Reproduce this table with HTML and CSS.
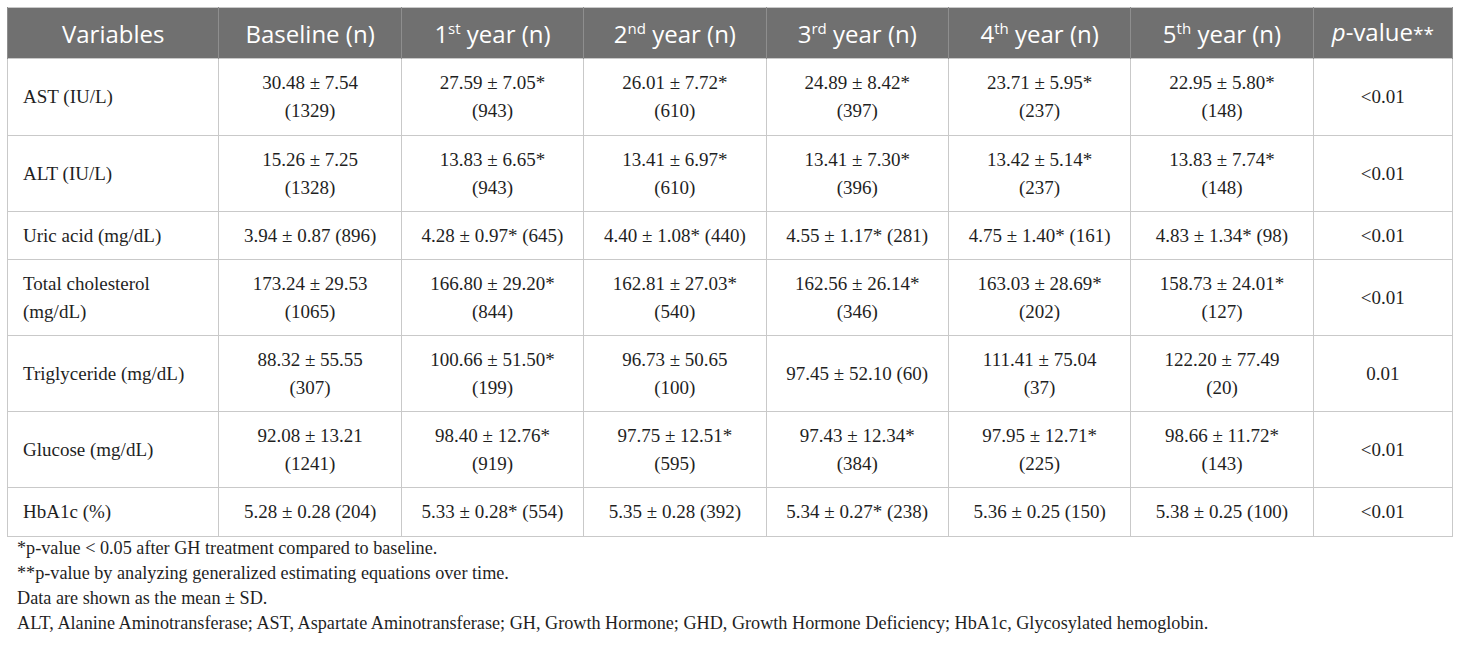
FILE: index.html
```html
<!DOCTYPE html>
<html>
<head>
<meta charset="utf-8">
<link rel="stylesheet" href="styles.css">
</head>
<body>
<div class="page">
<table class="data">
<colgroup>
<col class="c-var"><col class="c-yr"><col class="c-yr"><col class="c-yr"><col class="c-yr"><col class="c-yr"><col class="c-yr"><col class="c-p">
</colgroup>
<thead>
<tr>
<th>Variables</th>
<th>Baseline (n)</th>
<th>1<sup>st</sup> year (n)</th>
<th>2<sup>nd</sup> year (n)</th>
<th>3<sup>rd</sup> year (n)</th>
<th>4<sup>th</sup> year (n)</th>
<th>5<sup>th</sup> year (n)</th>
<th><i>p</i>-value<span class="ast">**</span></th>
</tr>
</thead>
<tbody>
<tr class="two first">
<td>AST (IU/L)</td>
<td>30.48 ± 7.54<br>(1329)</td>
<td>27.59 ± 7.05*<br>(943)</td>
<td>26.01 ± 7.72*<br>(610)</td>
<td>24.89 ± 8.42*<br>(397)</td>
<td>23.71 ± 5.95*<br>(237)</td>
<td>22.95 ± 5.80*<br>(148)</td>
<td>&lt;0.01</td>
</tr>
<tr class="two">
<td>ALT (IU/L)</td>
<td>15.26 ± 7.25<br>(1328)</td>
<td>13.83 ± 6.65*<br>(943)</td>
<td>13.41 ± 6.97*<br>(610)</td>
<td>13.41 ± 7.30*<br>(396)</td>
<td>13.42 ± 5.14*<br>(237)</td>
<td>13.83 ± 7.74*<br>(148)</td>
<td>&lt;0.01</td>
</tr>
<tr>
<td>Uric acid (mg/dL)</td>
<td>3.94 ± 0.87 (896)</td>
<td>4.28 ± 0.97* (645)</td>
<td>4.40 ± 1.08* (440)</td>
<td>4.55 ± 1.17* (281)</td>
<td>4.75 ± 1.40* (161)</td>
<td>4.83 ± 1.34* (98)</td>
<td>&lt;0.01</td>
</tr>
<tr class="two">
<td>Total cholesterol<br>(mg/dL)</td>
<td>173.24 ± 29.53<br>(1065)</td>
<td>166.80 ± 29.20*<br>(844)</td>
<td>162.81 ± 27.03*<br>(540)</td>
<td>162.56 ± 26.14*<br>(346)</td>
<td>163.03 ± 28.69*<br>(202)</td>
<td>158.73 ± 24.01*<br>(127)</td>
<td>&lt;0.01</td>
</tr>
<tr class="two">
<td>Triglyceride (mg/dL)</td>
<td>88.32 ± 55.55<br>(307)</td>
<td>100.66 ± 51.50*<br>(199)</td>
<td>96.73 ± 50.65<br>(100)</td>
<td>97.45 ± 52.10 (60)</td>
<td>111.41 ± 75.04<br>(37)</td>
<td>122.20 ± 77.49<br>(20)</td>
<td>0.01</td>
</tr>
<tr class="two">
<td>Glucose (mg/dL)</td>
<td>92.08 ± 13.21<br>(1241)</td>
<td>98.40 ± 12.76*<br>(919)</td>
<td>97.75 ± 12.51*<br>(595)</td>
<td>97.43 ± 12.34*<br>(384)</td>
<td>97.95 ± 12.71*<br>(225)</td>
<td>98.66 ± 11.72*<br>(143)</td>
<td>&lt;0.01</td>
</tr>
<tr class="last">
<td>HbA1c (%)</td>
<td>5.28 ± 0.28 (204)</td>
<td>5.33 ± 0.28* (554)</td>
<td>5.35 ± 0.28 (392)</td>
<td>5.34 ± 0.27* (238)</td>
<td>5.36 ± 0.25 (150)</td>
<td>5.38 ± 0.25 (100)</td>
<td>&lt;0.01</td>
</tr>
</tbody>
</table>
<div class="notes">
<p>*p-value &lt; 0.05 after GH treatment compared to baseline.</p>
<p>**p-value by analyzing generalized estimating equations over time.</p>
<p>Data are shown as the mean ± SD.</p>
<p>ALT, Alanine Aminotransferase; AST, Aspartate Aminotransferase; GH, Growth Hormone; GHD, Growth Hormone Deficiency; HbA1c, Glycosylated hemoglobin.</p>
</div>
</div>
</body>
</html>
```
FILE: styles.css
```css
html, body {
  margin: 0;
  padding: 0;
  background: #ffffff;
}
.page {
  padding: 7px 0 0 7px;
  font-family: "Liberation Serif", "Times New Roman", serif;
  color: #222;
}
.data {
  border-collapse: collapse;
  table-layout: fixed;
  width: 1446px;
  border: 1px solid #c9c9c9;
}
.c-var { width: 211px; }
.c-yr { width: 182px; }
.c-p { width: 139px; }
.data th {
  background: #707070;
  color: #ffffff;
  font-family: "Open Sans", "Noto Sans", sans-serif;
  font-weight: 400;
  font-size: 24px;
  line-height: 33px;
  height: 51px;
  padding: 0 4px;
  border-left: 1px solid #8e8e8e;
  border-right: 1px solid #8e8e8e;
  text-align: center;
  box-sizing: border-box;
  white-space: nowrap;
}
.data th sup {
  font-size: 15px;
  line-height: 0;
  vertical-align: 9px;
}
.data th .ast {
  font-size: 19px;
}
.data td {
  font-size: 19px;
  line-height: 28px;
  padding: 9px 6px;
  height: 48px;
  box-sizing: border-box;
  border: 1px solid #c9c9c9;
  text-align: center;
  vertical-align: middle;
  color: #1f1f1f;
}
.data td:first-child {
  text-align: left;
  padding-left: 15px;
}
.data tr.two td {
  height: 76px;
}
.data tr.first td {
  height: 77px;
}
.data tr.last td {
  height: 49px;
}
.notes {
  padding: 0 0 0 10px;
  margin-top: -1px;
  font-size: 18.2px;
  line-height: 25px;
  color: #1f1f1f;
}
.notes p {
  margin: 0;
}
```
